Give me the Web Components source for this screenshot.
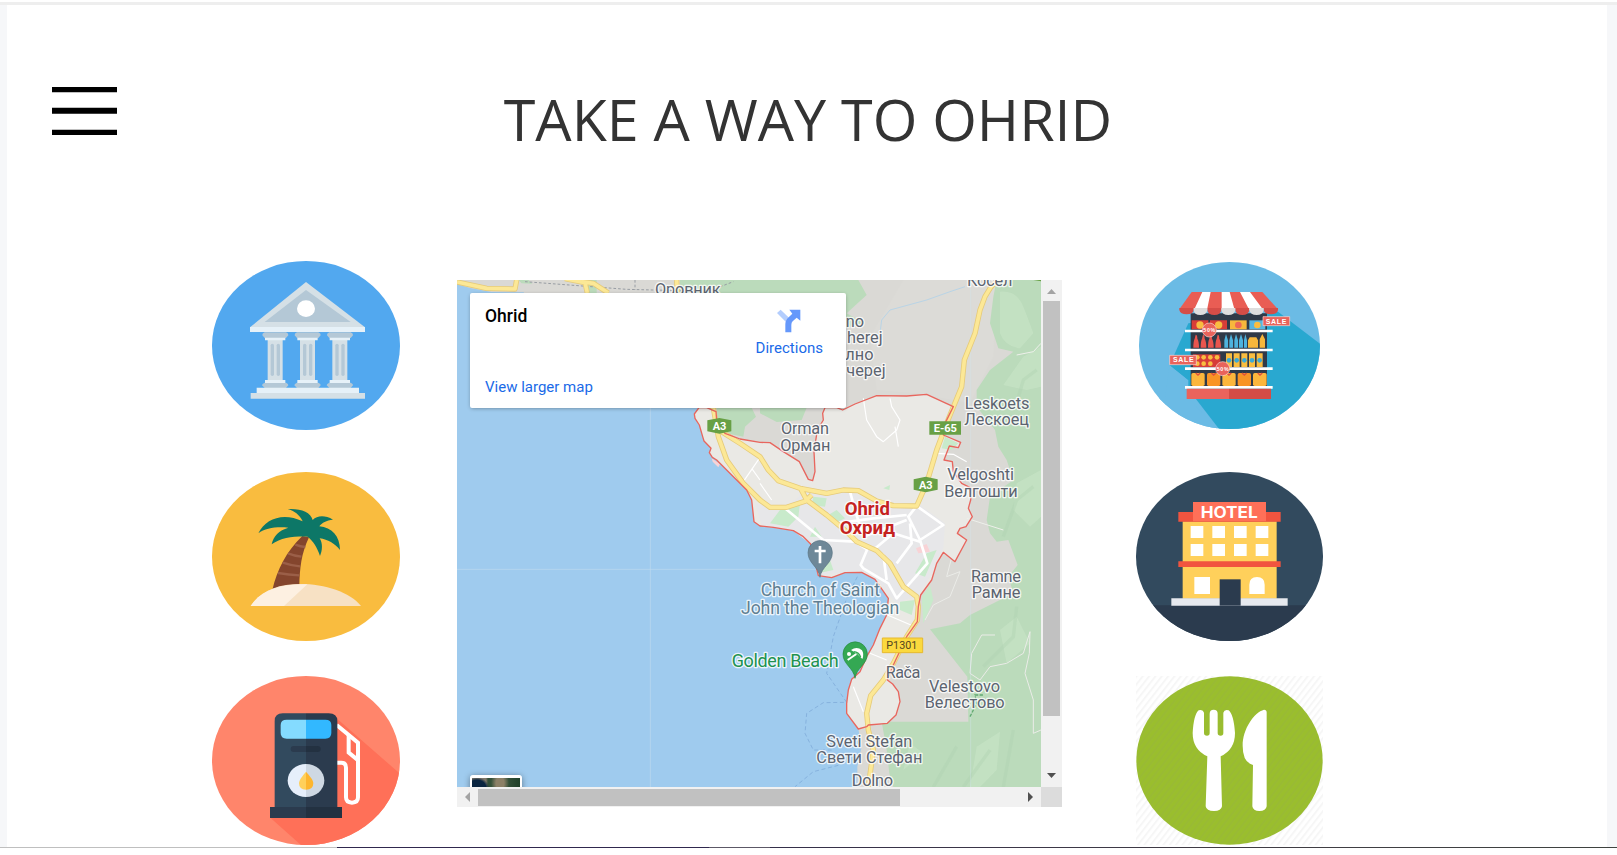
<!DOCTYPE html>
<html lang="en">
<head>
<meta charset="utf-8">
<title>Take a way to Ohrid</title>
<style>
html,body{margin:0;height:100%;background:#fff;overflow:hidden}
body{font-family:"Open Sans","Noto Sans",sans-serif;color:#333}
</style>
</head>
<body>
<travel-page>
  <menu-button slot="menu"></menu-button>
  <page-title slot="title">TAKE A WAY TO OHRID</page-title>
  <icon-column slot="left">
    <place-icon name="bank"></place-icon>
    <place-icon name="beach"></place-icon>
    <place-icon name="fuel"></place-icon>
  </icon-column>
  <map-embed slot="map">
    <map-card slot="card">
      <span slot="name">Ohrid</span>
      <span slot="directions">Directions</span>
      <span slot="link">View larger map</span>
    </map-card>
  </map-embed>
  <icon-column slot="right">
    <place-icon name="market"></place-icon>
    <place-icon name="hotel"></place-icon>
    <place-icon name="food"></place-icon>
  </icon-column>
</travel-page>

<template id="t-bank"><svg viewBox="36 33 564 507" preserveAspectRatio="none">
<ellipse cx="318" cy="286.500" rx="282" ry="253.500" fill="#52a8ef"/>
<path d="M318 96L495 232H150Z" fill="#d5e0e6"/><path d="M318 120L452 216H194Z" fill="#b4c8d6"/>
<ellipse cx="318" cy="176" rx="27" ry="25" fill="#fff"/><path d="M150 231h345v15H150z" fill="#e6f1f8"/>
<g id="c"><path d="M194 247h64q8 3 7 9l-7 8h-64l-7-8q-1-6 7-9zM194 398h64q8 4 7 8l-7 8h-64l-8-8q0-5 8-8z" fill="#b4c8d6"/><path d="M203 270h45v121h-45z" fill="#d5e0e6"/><path d="M195 263h61v8h-61zM195 390h61v9h-61z" fill="#e6f1f8"/><rect x="212" y="281" width="10" height="97" rx="5" fill="#b4c8d6"/><rect x="230" y="281" width="10" height="97" rx="5" fill="#b4c8d6"/></g>
<use href="#c" x="97"/><use href="#c" x="194"/>
<path d="M170 413h307v17H170z" fill="#e6f1f8"/><path d="M152 429h343v17H152z" fill="#d5e0e6"/>
</svg></template>

<template id="t-beach"><svg viewBox="36 36 564 507" preserveAspectRatio="none">
<ellipse cx="318" cy="289.500" rx="282" ry="253.500" fill="#f9bc3f"/>
<path d="M307 228L327 232C304 280 299 325 298 380L217 390C232 327 258 276 307 228Z" fill="#84452d"/>
<path d="M286 254q15 6 30 7M264 280q20 8 40 10M248 308q26 9 52 11M234 339q33 5 64 7" stroke="#9b5f48" stroke-width="7" fill="none"/>
<path d="M152 438C182 392 235 372 300 372C375 372 450 396 483 438Z" fill="#f7e1c4"/><path d="M152 438C182 392 235 372 322 373L252 438Z" fill="#fdf0e1"/>
<path d="M263 147C302 145 332 155 338 180C352 166 375 165 399 179C379 181 366 188 358 199C395 202 420 228 420 270C404 250 384 239 359 235C369 251 367 272 360 288C351 261 340 244 323 230C279 229 244 233 215 253C220 229 237 211 265 203C228 200 196 204 175 220C197 175 250 156 308 184C298 163 283 153 263 147Z" fill="#0d7767"/>
</svg></template>

<template id="t-fuel"><svg viewBox="36 33 564 507" preserveAspectRatio="none">
<defs><clipPath id="k"><ellipse cx="318" cy="286.500" rx="282" ry="253.500"/></clipPath></defs>
<g clip-path="url(#k)"><path d="M36 33h564v507H36z" fill="#ff856b"/><path d="M412 162L610 335V560H325L211 458L300 300Z" fill="#ff7058"/></g>
<path d="M410 180L474 233V397Q474 413 456 413Q438 413 438 397V308Q438 293 424 293H410" fill="none" stroke="#fff" stroke-width="12"/>
<path d="M446 210V263L472 284" fill="none" stroke="#fff" stroke-width="12"/>
<path d="M224 428V168Q224 145 248 145H318V428Z" fill="#324a5e"/><path d="M318 145H386Q412 145 412 168V428H318Z" fill="#2b3b4e"/>
<path d="M210 426h108v33H210z" fill="#2b3b4e"/><path d="M318 426h108v33H318z" fill="#233141"/>
<path d="M318 164H260Q242 164 242 180V204Q242 221 260 221H318Z" fill="#84dbff"/><path d="M318 164H376Q394 164 394 180V204Q394 221 376 221H318Z" fill="#32b8ff"/>
<path d="M318 243H281Q272 243 272 252T281 261H318Z" fill="#2b3b4e"/><path d="M318 243H353Q362 243 362 252T353 261H318Z" fill="#233141"/>
<path d="M318 297A55 49.500 0 0 0 318 396Z" fill="#e6effb"/><path d="M318 297A55 49.500 0 0 1 318 396Z" fill="#ced8e3"/>
<path d="M318 320Q297 344 297 354Q297 374 318 374Z" fill="#ffd05b"/><path d="M318 320Q340 344 340 354Q340 374 318 374Z" fill="#fdb62f"/>
</svg></template>

<template id="t-market"><svg viewBox="33 33 561 507" preserveAspectRatio="none">
<defs><clipPath id="k"><ellipse cx="313.500" cy="286.500" rx="271.500" ry="250.500"/></clipPath></defs>
<g clip-path="url(#k)"><path d="M33 33h561v507H33z" fill="#6bbbe5"/><path d="M459 185L610 300V560H300L134 345L190 220Z" fill="#29a8d0"/><path d="M190 445L290 550H150L100 445Z" fill="#6bbbe5"/><path d="M134 345L190 390V445L120 445Z" fill="#6bbbe5"/><path d="M134 345H190V390Z" fill="#29a8d0"/></g>
<path d="M197 190h229v225H197z" fill="#303a48"/>
<path d="M200 126H412L459 178H163Z" fill="#e95d54"/>
<path d="M232 126h25L246 180H207zM290 126h24L329 180H290zM345 126h30L415 180H373z" fill="#fff"/>
<g fill="#d54d47"><path d="M163 174h43v6q-2 13-21 13t-22-13zM247 174h42v6q-2 15-21 15t-21-15zM331 174h42v6q-2 15-21 15t-21-15zM416 174h43v6q-2 13-21 13t-22-13z"/></g>
<path d="M206 174h41v6q-2 15-21 15t-20-15zM289 174h42v6q-2 15-21 15t-21-15zM373 174h43v6q-2 15-21 15t-22-15z" fill="#dedddd"/>
<path d="M200 211h50v27h-50zM255 211h51v27h-51z" fill="#d83d38"/><path d="M315 211h50v27h-50z" fill="#f7b73c"/><path d="M373 211h48v27h-48z" fill="#58b6df"/>
<g fill="#f9bd40"><circle cx="225" cy="225" r="11"/><circle cx="281" cy="225" r="11"/><circle cx="397" cy="225" r="10"/></g><circle cx="340" cy="225" r="10" fill="#ed6755"/>
<path id="b" d="M212 254q5 0 5 12q5 7 5 27h-17q0-20 4-27z" fill="#e9554e"/><use href="#b" x="22"/><use href="#b" x="44"/><use href="#b" x="66"/>
<path d="M298 293v-22l5-19 6 19v22zM313 293v-22l5-19 6 19v22zM328 293v-22l5-19 6 19v22zM342 293v-22l6-19 6 19v22zM357 293v-22l4-19 5 19v22z" fill="#4eb3de"/>
<path d="M369 293v-22l5-9h20l5 9v22zM404 293v-25l8-16 8 16v25z" fill="#f7b73c"/>
<path d="M204 313h82v38h-82z" fill="#d63d38"/><g fill="#f9bd40"><circle cx="217" cy="322" r="7"/><circle cx="236" cy="322" r="7"/><circle cx="256" cy="322" r="7"/><circle cx="276" cy="322" r="7"/><circle cx="217" cy="341" r="7"/><circle cx="236" cy="341" r="7"/><circle cx="256" cy="341" r="7"/><path d="M303 310h18v41h-18zM326 310h18v41h-18zM349 310h18v41h-18zM372 310h18v41h-18zM395 310h18v41h-18z"/></g>
<g fill="#3aaad8"><circle cx="312" cy="331" r="7"/><circle cx="335" cy="331" r="7"/><circle cx="358" cy="331" r="7"/><circle cx="381" cy="331" r="7"/><circle cx="404" cy="331" r="7"/></g>
<g fill="#fbb63c"><rect x="199" y="369" width="40" height="39" rx="5"/><rect x="292" y="369" width="40" height="39" rx="5"/><rect x="384" y="369" width="41" height="39" rx="5"/></g><g fill="#f99425"><rect x="246" y="369" width="40" height="39" rx="5"/><rect x="338" y="369" width="40" height="39" rx="5"/></g>
<path d="M212 369l7 6 7-6M259 369l7 6 7-6M305 369l7 6 7-6M351 369l7 6 7-6M398 369l7 6 7-6" fill="none" stroke="#df503d" stroke-width="4"/>
<path d="M180 239h263v8H180zM180 296h263v8H180zM180 352h263v8H180zM180 408h263v8H180z" fill="#fff"/>
<path d="M185 416h127v31H185z" fill="#ea635c"/><path d="M312 416h126v31H312z" fill="#d44c46"/>
<g fill="#e9635b" stroke="#fbd8d4" stroke-width="2"><path d="M414 200h80v27h-80zM134 316h80v28h-80z"/><circle cx="253" cy="240" r="21"/><circle cx="293" cy="356" r="21"/></g>
<g fill="#fff" font-family="Liberation Sans,sans-serif" font-weight="bold"><text x="422" y="221" font-size="21" textLength="62">SALE</text><text x="144" y="337" font-size="21" textLength="62">SALE</text><text x="235" y="246" font-size="16" textLength="36">50%</text><text x="275" y="362" font-size="16" textLength="36">50%</text></g>
</svg></template>

<template id="t-hotel"><svg viewBox="33 36 561 507" preserveAspectRatio="none">
<defs><clipPath id="k"><ellipse cx="313.500" cy="289.500" rx="280.500" ry="253.500"/></clipPath></defs>
<g clip-path="url(#k)"><path d="M33 36h561v507H33z" fill="#324a5e"/><path d="M33 436h561v110H33z" fill="#2b3b4e"/></g>
<path d="M173 184h282v232H173z" fill="#ffd05b"/><path d="M160 156h307v29H160zM160 304h307v17H160z" fill="#f1543f"/><path d="M204 126h219v58H204z" fill="#ff7058"/>
<g fill="#fff"><path d="M197 198h38v36h-38zM262 198h38v36h-38zM327 198h38v36h-38zM392 198h38v36h-38zM197 252h38v36h-38zM262 252h38v36h-38zM327 252h38v36h-38zM392 252h38v36h-38zM208 351h47v51h-47zM373 402v-28q0-23 23-23t23 23v28z"/></g>
<path d="M139 415h349v22H139z" fill="#e6e9ee"/><path d="M284 358h63v79h-63z" fill="#2b3b4e"/>
<text x="227" y="173" textLength="171" lengthAdjust="spacingAndGlyphs" font-family="Inter,sans-serif" font-weight="700" font-size="46" fill="#fff">HOTEL</text>
</svg></template>

<template id="t-food"><svg viewBox="33 33 561 507" preserveAspectRatio="none">
<defs><pattern id="s" width="15" height="14" patternUnits="userSpaceOnUse" patternTransform="rotate(38)"><path d="M0 0h6v14H0z" fill="#8b8b8b" opacity=".08"/></pattern></defs>
<path d="M33 33h561v507H33z" fill="#fff"/><path d="M33 33h561v507H33z" fill="url(#s)"/>
<ellipse cx="313.500" cy="286.500" rx="279.500" ry="252.500" fill="#9abe2d"/><ellipse cx="313.500" cy="286.500" rx="279.500" ry="252.500" fill="url(#s)"/>
<path d="M221 136Q234 132 237 143V204Q237 212 246 212Q254 212 254 204V146Q254 134 266 134Q278 134 278 146V204Q278 212 287 212Q295 212 295 204V143Q298 132 311 136Q326 148 330 204Q330 254 287 274L291 424Q289 438 267 438Q244 438 242 424L247 274Q203 254 203 204Q206 149 221 136Z" fill="#fff"/>
<path d="M417 134Q425 134 425 142V424Q423 438 403 438Q384 438 382 424L384 300Q353 292 353 242C353 191 388 142 417 134Z" fill="#fff"/>
</svg></template>

<template id="t-map"><svg viewBox="21 30 1752 1521" preserveAspectRatio="none">
<defs>
<path id="city" d="M747 413L733 432L735 445L748 465L758 500L762 513L783 535L778 548L787 562L800 570L815 585L860 630L890 660L905 690L912 755L930 768L970 772L1030 782L1060 800L1082 822L1105 917L1145 923L1185 908L1235 907L1275 928L1315 985L1310 1035L1290 1075L1270 1125L1250 1160L1230 1205L1205 1228L1195 1260L1190 1300L1190 1330L1225 1377L1250 1370L1255 1365L1312 1360L1338 1335L1350 1295L1345 1265L1328 1242L1312 1230L1330 1185L1370 1100L1402 1055L1405 1010L1412 975L1445 930L1460 880L1480 847L1515 875L1550 810L1522 790L1530 775L1548 770L1567 740L1555 715L1562 690L1565 655L1535 640L1510 605L1507 575L1482 570L1498 528L1525 533L1532 517L1480 495L1485 460L1510 410L1430 373L1370 378L1280 377L1215 402L1178 420L1160 413L1125 413L1118 430L1120 450L1102 480L1092 545L1095 605L1088 632L1075 628L1048 575L1000 545L960 518L930 517L870 507L825 490L800 450L798 425L770 413Z"/>
<path id="rd" d="M715 360L790 413L805 500L830 570L880 640L930 690L960 712L1010 712L1065 694L1085 675M815 485L870 520L930 560L955 600L985 632L1050 655L1130 670L1180 660L1225 662L1280 693L1330 707L1400 708L1430 640L1460 540L1490 460L1535 350L1543 270L1575 190L1590 120L1605 80L1622 52L1650 22M1050 652L1070 690L1130 735L1190 785L1220 815L1280 842L1320 880L1360 950L1400 980L1405 1010L1402 1050L1370 1100L1330 1180L1300 1230L1262 1277L1250 1330L1255 1380L1270 1440L1255 1551M21 36L110 55L195 57L200 30M345 26L405 38L412 69M395 35L430 40L475 69M680 30L682 69"/>
</defs>
<path d="M21 30h1752v1521H21z" fill="#dad9d5"/>
<path d="M1360 30L1640 30L1630 260L1560 400L1400 370L1280 360L1260 200Z" fill="#dcdbd7"/>
<path d="M690 30H1225L1250 75L1190 130L1240 158L1170 180L1188 250H1100L690 70ZM800 413H905L918 440L885 470L880 500L830 490L800 450ZM930 413H1070L1055 450L980 456L930 430ZM1640 30H1773V1551H1330L1318 1510L1310 1440L1295 1355H1555L1552 1220L1440 1078L1530 1060L1560 1035L1690 970L1675 920L1703 885L1675 810L1640 815L1620 790L1610 750L1620 680L1690 630L1670 570L1645 530L1635 480L1580 410L1580 360L1620 300L1690 245L1645 235L1620 160L1630 80Z" fill="#bbdbbb"/>
<path d="M1650 65Q1700 60 1720 110T1750 190L1710 235Q1665 230 1650 190ZM1720 260L1773 230V350L1730 360L1660 345ZM1700 640L1773 600V740L1740 770L1690 720ZM1650 1080L1700 1040L1740 1120L1670 1180ZM1580 1430L1650 1385L1640 1500L1590 1551H1560ZM1380 1420L1420 1450L1360 1500Z" fill="#c6e2c4" opacity=".8"/>
<path d="M1760 300L1720 330L1700 400M1750 650L1700 690L1660 800M1700 1010L1690 1100L1600 1190M1520 1430L1450 1551M1690 1380L1660 1551M1620 1440L1540 1551" stroke="#afd2b1" stroke-width="10" fill="none" opacity=".4"/>
<path d="M21 42L60 54L125 66L220 67L250 90V413H747L733 432L735 445L748 465L758 500L762 513L783 535L778 548L800 570L860 630L890 660L905 690L912 755L930 768L1030 782L1082 822L1105 917L1145 923L1185 908L1235 907L1275 928L1315 985L1310 1035L1270 1125L1230 1205L1205 1228L1190 1300V1330L1225 1377L1235 1430L1222 1490V1551H21Z" fill="#9fcbee"/>
<path d="M205 30H235L247 41L215 40ZM400 30H440V69H415ZM800 30H930V60H860Z" fill="#bbdbbb"/>
<use href="#city" fill="#eae9e5"/>
<path d="M915 700L1000 720L1070 660L1190 665L1300 700L1410 705L1485 760L1480 835L1440 920L1405 975L1340 1000L1275 928L1235 907L1185 908L1110 915L1082 822L1030 782L935 765Z" fill="#e7e7e9"/>
<path d="M990 720L1050 700L1045 740L1015 770L960 760ZM1090 680L1130 685L1125 710L1085 705ZM1300 655L1320 645L1318 660ZM1135 735L1160 720L1185 745L1155 760ZM1110 840L1140 870L1150 900L1105 910ZM1485 500L1525 520L1505 540L1475 535ZM1430 850L1460 840L1425 920L1395 910ZM1350 995L1395 990L1385 1035L1350 1020ZM1280 720L1310 715L1300 740ZM1095 770L1115 800L1080 800ZM1415 980L1440 945L1450 990L1420 1060Z" fill="#c8eacb"/>
<path d="M1398 835L1430 822L1440 845L1405 850ZM785 565L810 582L805 592L788 575Z" fill="#f8d3d6"/>
<g fill="none" stroke="#fff" stroke-linejoin="round">
<path stroke-width="8" d="M1005 715L1120 810L1085 830M1400 708L1480 765L1410 810L1375 740L1400 708M1410 810L1432 880L1340 985L1315 940L1240 895L1232 885L1255 830L1300 855L1310 930M1160 760L1270 745L1370 735M1200 665L1215 720L1240 800L1370 750M1380 760L1385 820L1340 880M1270 840L1330 790L1410 815M1255 840L1215 815L1120 810"/>
<path stroke-width="3.500" d="M930 640L965 690M880 635L928 565M905 595L930 630M1240 385L1250 450L1280 500L1300 515L1340 480L1350 450L1325 410L1320 385M1335 470L1345 530M1460 550L1510 553L1550 575M1300 1030L1395 1070M1260 1150L1310 1170M1210 1250L1240 1325"/>
<path stroke-width="3" stroke="#eef0eb" d="M1550 745L1660 780M1773 220L1750 245L1700 255"/>
</g>
<path d="M1503 870L1490 920L1530 905L1500 980L1450 1005L1425 1050M1635 1095H1595L1565 1150L1560 1210L1590 1230L1620 1190L1670 1180L1720 1150L1740 1085L1738 1150L1725 1210L1750 1290L1750 1390L1773 1380" stroke="#ebece8" stroke-width="3" fill="none"/>
<path d="M1290 190L1295 150L1320 120L1430 90L1500 65L1545 50" stroke="#b9d4e6" stroke-width="3" fill="none"/>
<path d="M225 35L530 58L690 62L780 62L850 35M555 30V60" stroke="#989da3" stroke-width="3" stroke-dasharray="8 6" fill="none"/>
<path d="M1222 920L1190 985L1150 1100L1130 1210L1190 1297L1120 1298L1070 1330L1065 1390L1090 1440L1150 1440M1165 1486L1090 1505L1035 1550" stroke="#86b2de" stroke-width="3" stroke-dasharray="12 8" fill="none"/>
<path d="M601 413V1551M21 898H1115M1562 30V1551" stroke="#d3e6ee" stroke-width="2" opacity=".6"/>
<use href="#rd" fill="none" stroke="#e6cb7a" stroke-width="16" stroke-linejoin="round"/><use href="#rd" fill="none" stroke="#fce896" stroke-width="11" stroke-linejoin="round"/>
<use href="#city" fill="none" stroke="#e8665e" stroke-width="4" stroke-linejoin="round"/>
<path d="M1560 1340L1580 1300L1575 1275L1600 1275" stroke="#62aa72" stroke-width="4" stroke-dasharray="10 4" fill="none"/>
<g fill="#68a045"><path d="M772 451L808 444L844 451V484L808 491L772 484ZM1391 628L1427 620L1463 628V659L1427 667L1391 659ZM1438 454h95v40h-95zM1750 30H1773V34Z"/></g>
<path d="M1297 1104h121v44h-121z" fill="#fbd93e" stroke="#e7b92e" stroke-width="3"/>
<g font-family="Roboto,sans-serif" font-weight="700" font-size="34" fill="#fff"><text x="788" y="480" textLength="41" lengthAdjust="spacingAndGlyphs">A3</text><text x="1407" y="656" textLength="41" lengthAdjust="spacingAndGlyphs">A3</text><text x="1451" y="486" textLength="70" lengthAdjust="spacingAndGlyphs">E-65</text><text x="1309" y="1137" fill="#51441f" font-weight="400" textLength="93" lengthAdjust="spacingAndGlyphs">P1301</text></g>
<g font-family="Roboto,sans-serif" font-size="49" fill="#5c6470" stroke="#fff" stroke-width="8" stroke-opacity=".8" stroke-linejoin="round" paint-order="stroke">
<text x="615" y="75" textLength="197">Оровник</text><text x="1551" y="48" textLength="136">Косел</text>
<text x="1187" y="171">no</text><text x="1191" y="220">herej</text><text x="1186" y="269">лно</text><text x="1189" y="318">череј</text>
<text x="1544" y="416" textLength="194">Leskoets</text><text x="1543" y="465" textLength="194">Лескоец</text>
<text x="993" y="493" textLength="144">Orman</text><text x="991" y="542" textLength="150">Орман</text>
<text x="1492" y="631" textLength="200">Velgoshti</text><text x="1483" y="680" textLength="220">Велгошти</text>
<text x="1563" y="935" textLength="150">Ramne</text><text x="1565" y="984" textLength="146">Рамне</text>
<text x="1307" y="1223" textLength="104">Rača</text><text x="1437" y="1265" textLength="213">Velestovo</text><text x="1424" y="1314" textLength="240">Велестово</text>
<text x="1129" y="1430" textLength="258">Sveti Stefan</text><text x="1099" y="1479" textLength="318">Свети Стефан</text><text x="1205" y="1549" textLength="124">Dolno</text>
<g fill="#5f7f92" font-size="53"><text x="932" y="978" textLength="358">Church of Saint</text><text x="873" y="1031" textLength="475">John the Theologian</text></g>
<text x="845" y="1190" textLength="321" font-size="54" fill="#20924f">Golden Beach</text>
<g fill="#c5221f" font-weight="700" font-size="55"><text x="1184" y="736" textLength="136" lengthAdjust="spacingAndGlyphs">Ohrid</text><text x="1169" y="793" textLength="166" lengthAdjust="spacingAndGlyphs">Охрид</text></g>
</g>
<path d="M1110 922C1106 890 1074 880 1074 848a36 36 0 0 1 73 0C1147 880 1114 890 1110 922Z" fill="#6e8898" stroke="#5b7484" stroke-width="2"/><path d="M1110 828v52M1094 843h33" stroke="#fff" stroke-width="8"/>
<path d="M1215 1225C1211 1193 1179 1184 1179 1152a36 36 0 0 1 73 0C1252 1184 1219 1193 1215 1225Z" fill="#34a853" stroke="#24893f" stroke-width="2"/>
<circle cx="1197" cy="1152" r="6" fill="#fff"/><path d="M1203 1140Q1221 1127 1236 1141Q1243 1152 1237 1167L1222 1152Z" fill="#fff"/><path d="M1211 1145Q1226 1146 1232 1161" stroke="#34a853" stroke-width="4" fill="none"/><path d="M1193 1170L1219 1152" stroke="#fff" stroke-width="6"/>
</svg></template>

<script>
const tpl = id => document.getElementById(id).content.cloneNode(true);
function define(name, css, html, fill) {
  customElements.define(name, class extends HTMLElement {
    constructor() {
      super();
      const r = this.attachShadow({mode: 'open'});
      r.innerHTML = `<style>${css}</style>${html}`;
      if (fill) fill(this, r);
    }
  });
}
define('travel-page', `
:host{display:grid;grid-template-rows:2px 3px 842px 1px;height:855px;background:#fff}
.rule{background:#eee}
.frame{background:#fff;border:solid #f6f7f9;border-width:0 10px 0 7px;display:flex;flex-direction:column}
header{height:256px;box-sizing:border-box;position:relative;text-align:center;padding:74px 0 0 2px}
.menu{position:absolute;left:45px;top:82px}
main{display:flex;align-items:flex-start;padding-left:205px}
.map{margin:19px 74px 0 57px}
.edge{background:linear-gradient(90deg,#bfbfbf 337px,#30284e 337px 709px,#5c5866 709px 770px,#352f4a 770px,#403c45 1200px,#3f4340)}`,
`<div></div><div class="rule"></div><div class="frame"><header><div class="menu"><slot name="menu"></slot></div><slot name="title"></slot></header><main><slot name="left"></slot><div class="map"><slot name="map"></slot></div><slot name="right"></slot></main></div><div class="edge"></div>`);
define('menu-button', `:host{display:block}svg{display:block}`,
`<svg width="65" height="48"><path d="M0 0h65v5.300H0zM0 20.800h65v6H0zM0 42.700h65v5.300H0z"/></svg>`);
define('page-title', `:host{display:block}h1{margin:0;font:400 57.400px/80px "Open Sans",sans-serif;color:#333;white-space:nowrap}`, `<h1><slot></slot></h1>`);
define('icon-column', `:host{display:flex;flex-direction:column}::slotted(:nth-child(2)){margin:42px 0 35px}`, `<slot></slot>`);
define('place-icon', `:host{display:block;width:188px;height:169px}:host([name=market]),:host([name=hotel]),:host([name=food]){width:187px}svg{display:block;width:100%;height:100%}`, ``,
  (el, r) => r.append(tpl('t-' + el.getAttribute('name'))));
define('scroll-bar', `
:host{display:flex;align-items:center;background:#f1f1f1;width:21px;height:507px;flex-direction:column}
:host([dir=h]){width:584px;height:20px;flex-direction:row}
svg{flex:none;display:block}.thumb{background:#c1c1c1;flex:none}
.v .thumb{width:17px;height:415px}.h .thumb{height:17px;width:422px}
.v,.h{display:flex;align-items:center;width:100%;height:100%}.v{flex-direction:column}.gap{flex:1}`, ``,
  (el, r) => {
    const h = el.getAttribute('dir') === 'h';
    r.innerHTML += h
      ? `<div class="h"><svg width="21" height="20"><path d="M13 5v10l-5-5z" fill="#a3a3a3"/></svg><div class="thumb"></div><div class="gap"></div><svg width="21" height="20"><path d="M8 5v10l5-5z" fill="#505050"/></svg></div>`
      : `<div class="v"><svg width="21" height="21"><path d="M6 14h9l-4.500-5z" fill="#a3a3a3"/></svg><div class="thumb"></div><div class="gap"></div><svg width="21" height="21"><path d="M6 7h9l-4.500 5z" fill="#505050"/></svg></div>`;
  });
define('map-card', `
:host{display:flex;justify-content:space-between;box-sizing:border-box;width:376px;height:115px;background:#fff;border-radius:2px;box-shadow:0 1px 4px -1px rgba(0,0,0,.4);font-family:Roboto,sans-serif;padding:13px 23px 11px 15px}
.l{display:flex;flex-direction:column;justify-content:space-between}
.n{font-size:17.500px;font-weight:500;line-height:20px;color:#000}
.a{font-size:15px;line-height:20px;color:#1a6ae8}
.r{display:flex;flex-direction:column;align-items:center}svg{display:block;margin:3px 0 5px}`,
`<div class="l"><div class="n"><slot name="name"></slot></div><div class="a"><slot name="link"></slot></div></div>
<div class="r"><svg width="24" height="24" viewBox="52 119 72 72"><path d="M52 131L63 121L88 145L78 157Z" fill="#b3cdfd"/><path d="M77 189V165Q77 153 87 144L98 133L89 121H122V154L111 145L99 156Q95 160 95 167V189Z" fill="#6598fb"/></svg><div class="a"><slot name="directions"></slot></div></div>`);
define('map-embed', `
:host{display:grid;grid-template:507px 20px/584px 21px;width:605px;height:527px}
.view{position:relative;overflow:hidden}.view svg{display:block;width:584px;height:507px}
.card{position:absolute;left:13px;top:13px}.corner{background:#dcdcdc}
.sat{position:absolute;left:13px;top:495px;width:48px;height:48px;border:2px solid #fff;border-top-width:3px;border-radius:3px;box-shadow:0 1px 6px rgba(0,0,0,.4);background:radial-gradient(ellipse at 28px 5px,#8c8066 0 4px,transparent 9px),radial-gradient(ellipse at 5px 10px,#0a2540 9px,transparent 12px),linear-gradient(90deg,#80786a 0 14px,#335038 16px 36px,#1f4029)}`,
`<div class="view"><div class="card"><slot name="card"></slot></div><div class="sat"></div></div><scroll-bar></scroll-bar><scroll-bar dir="h"></scroll-bar><div class="corner"></div>`,
  (el, r) => r.querySelector('.view').prepend(tpl('t-map')));
</script>
</body>
</html>
